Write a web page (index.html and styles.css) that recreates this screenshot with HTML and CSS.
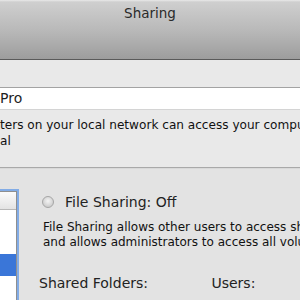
FILE: index.html
```html
<!DOCTYPE html>
<html lang="en">
<head>
    <meta charset="UTF-8">
    <title>Sharing</title>
    <link rel="stylesheet" href="styles.css">
</head>
<body>
    <div class="window">
        <div class="titlebar">Sharing</div>

        <div class="top">
            <div class="name-field">Pro</div>
            <div class="address">
                <div>ters on your local network can access your computer at:</div>
                <div>al</div>
            </div>
        </div>

        <div class="main">
            <div class="services">
                <div class="services-head"></div>
                <div class="row"></div>
                <div class="row"></div>
                <div class="row selected"></div>
                <div class="row"></div>
            </div>

            <div class="details">
                <div class="status">
                    <span class="light"></span>
                    <span>File Sharing: Off</span>
                </div>
                <p class="info">File Sharing allows other users to access shared folders on this computer,<br>and allows administrators to access all volumes.</p>
                <div class="lists">
                    <span class="folders">Shared Folders:</span>
                    <span>Users:</span>
                </div>
            </div>
        </div>
    </div>
</body>
</html>
```

FILE: styles.css
```css
* {
    margin: 0;
    padding: 0;
    box-sizing: border-box;
}

body {
    font-family: "DejaVu Sans", "Liberation Sans", sans-serif;
    color: #1e1e1e;
    background: #e3e3e3;
    width: 300px;
    height: 300px;
    overflow: hidden;
    white-space: nowrap;
}

.window {
    width: 300px;
    height: 300px;
    overflow: hidden;
}

.titlebar {
    height: 60px;
    padding-top: 5px;
    text-align: center;
    font-size: 13.5px;
    color: #2a2a2a;
    background: linear-gradient(to bottom, #e9e9e9 0, #cfcfcf 2px, #b9b9b9 30px, #9d9d9d 59px);
    border-bottom: 1px solid #5a5a5a;
}

.top {
    background: #e9e9e9;
    padding-top: 27px;
    height: 108px;
    border-bottom: 1px solid #a9a9a9;
}

.name-field {
    height: 23px;
    background: #fff;
    border-top: 1px solid #a3a3a3;
    border-bottom: 1px solid #d4d4d4;
    font-size: 14px;
    line-height: 21px;
}

.address {
    margin-top: 7px;
    font-size: 12.1px;
    line-height: 16px;
    color: #111;
}

.main {
    display: flex;
    border-top: 1px solid #d9d9d9;
}

.services {
    flex-shrink: 0;
    width: 28px;
    height: 140px;
    margin: 22px 0 0 -11px;
    background: #fff;
    border: 1px solid #8f8f8f;
    box-shadow: 0 0 0 2px #82ace6;
}

.services-head {
    height: 18px;
    background: linear-gradient(to bottom, #fbfbfb, #e3e3e3);
    border-bottom: 1px solid #b8b8b8;
}

.row {
    height: 22px;
}

.selected {
    background: #3a76d8;
}

.details {
    margin-left: 25px;
    padding-top: 25px;
}

.status {
    display: flex;
    align-items: center;
    gap: 11px;
    font-size: 14px;
    color: #222;
}

.light {
    flex-shrink: 0;
    width: 12px;
    height: 12px;
    border-radius: 50%;
    border: 1px solid #a6a6a6;
    background: radial-gradient(circle at 50% 40%, #f4f4f4, #cfcfcf 70%);
}

.info {
    margin-top: 10px;
    margin-left: 1px;
    font-size: 12px;
    line-height: 15px;
    color: #111;
}

.lists {
    margin-top: 25px;
    margin-left: -3px;
    font-size: 14px;
    color: #222;
}

.folders {
    display: inline-block;
    width: 168px;
}
```
